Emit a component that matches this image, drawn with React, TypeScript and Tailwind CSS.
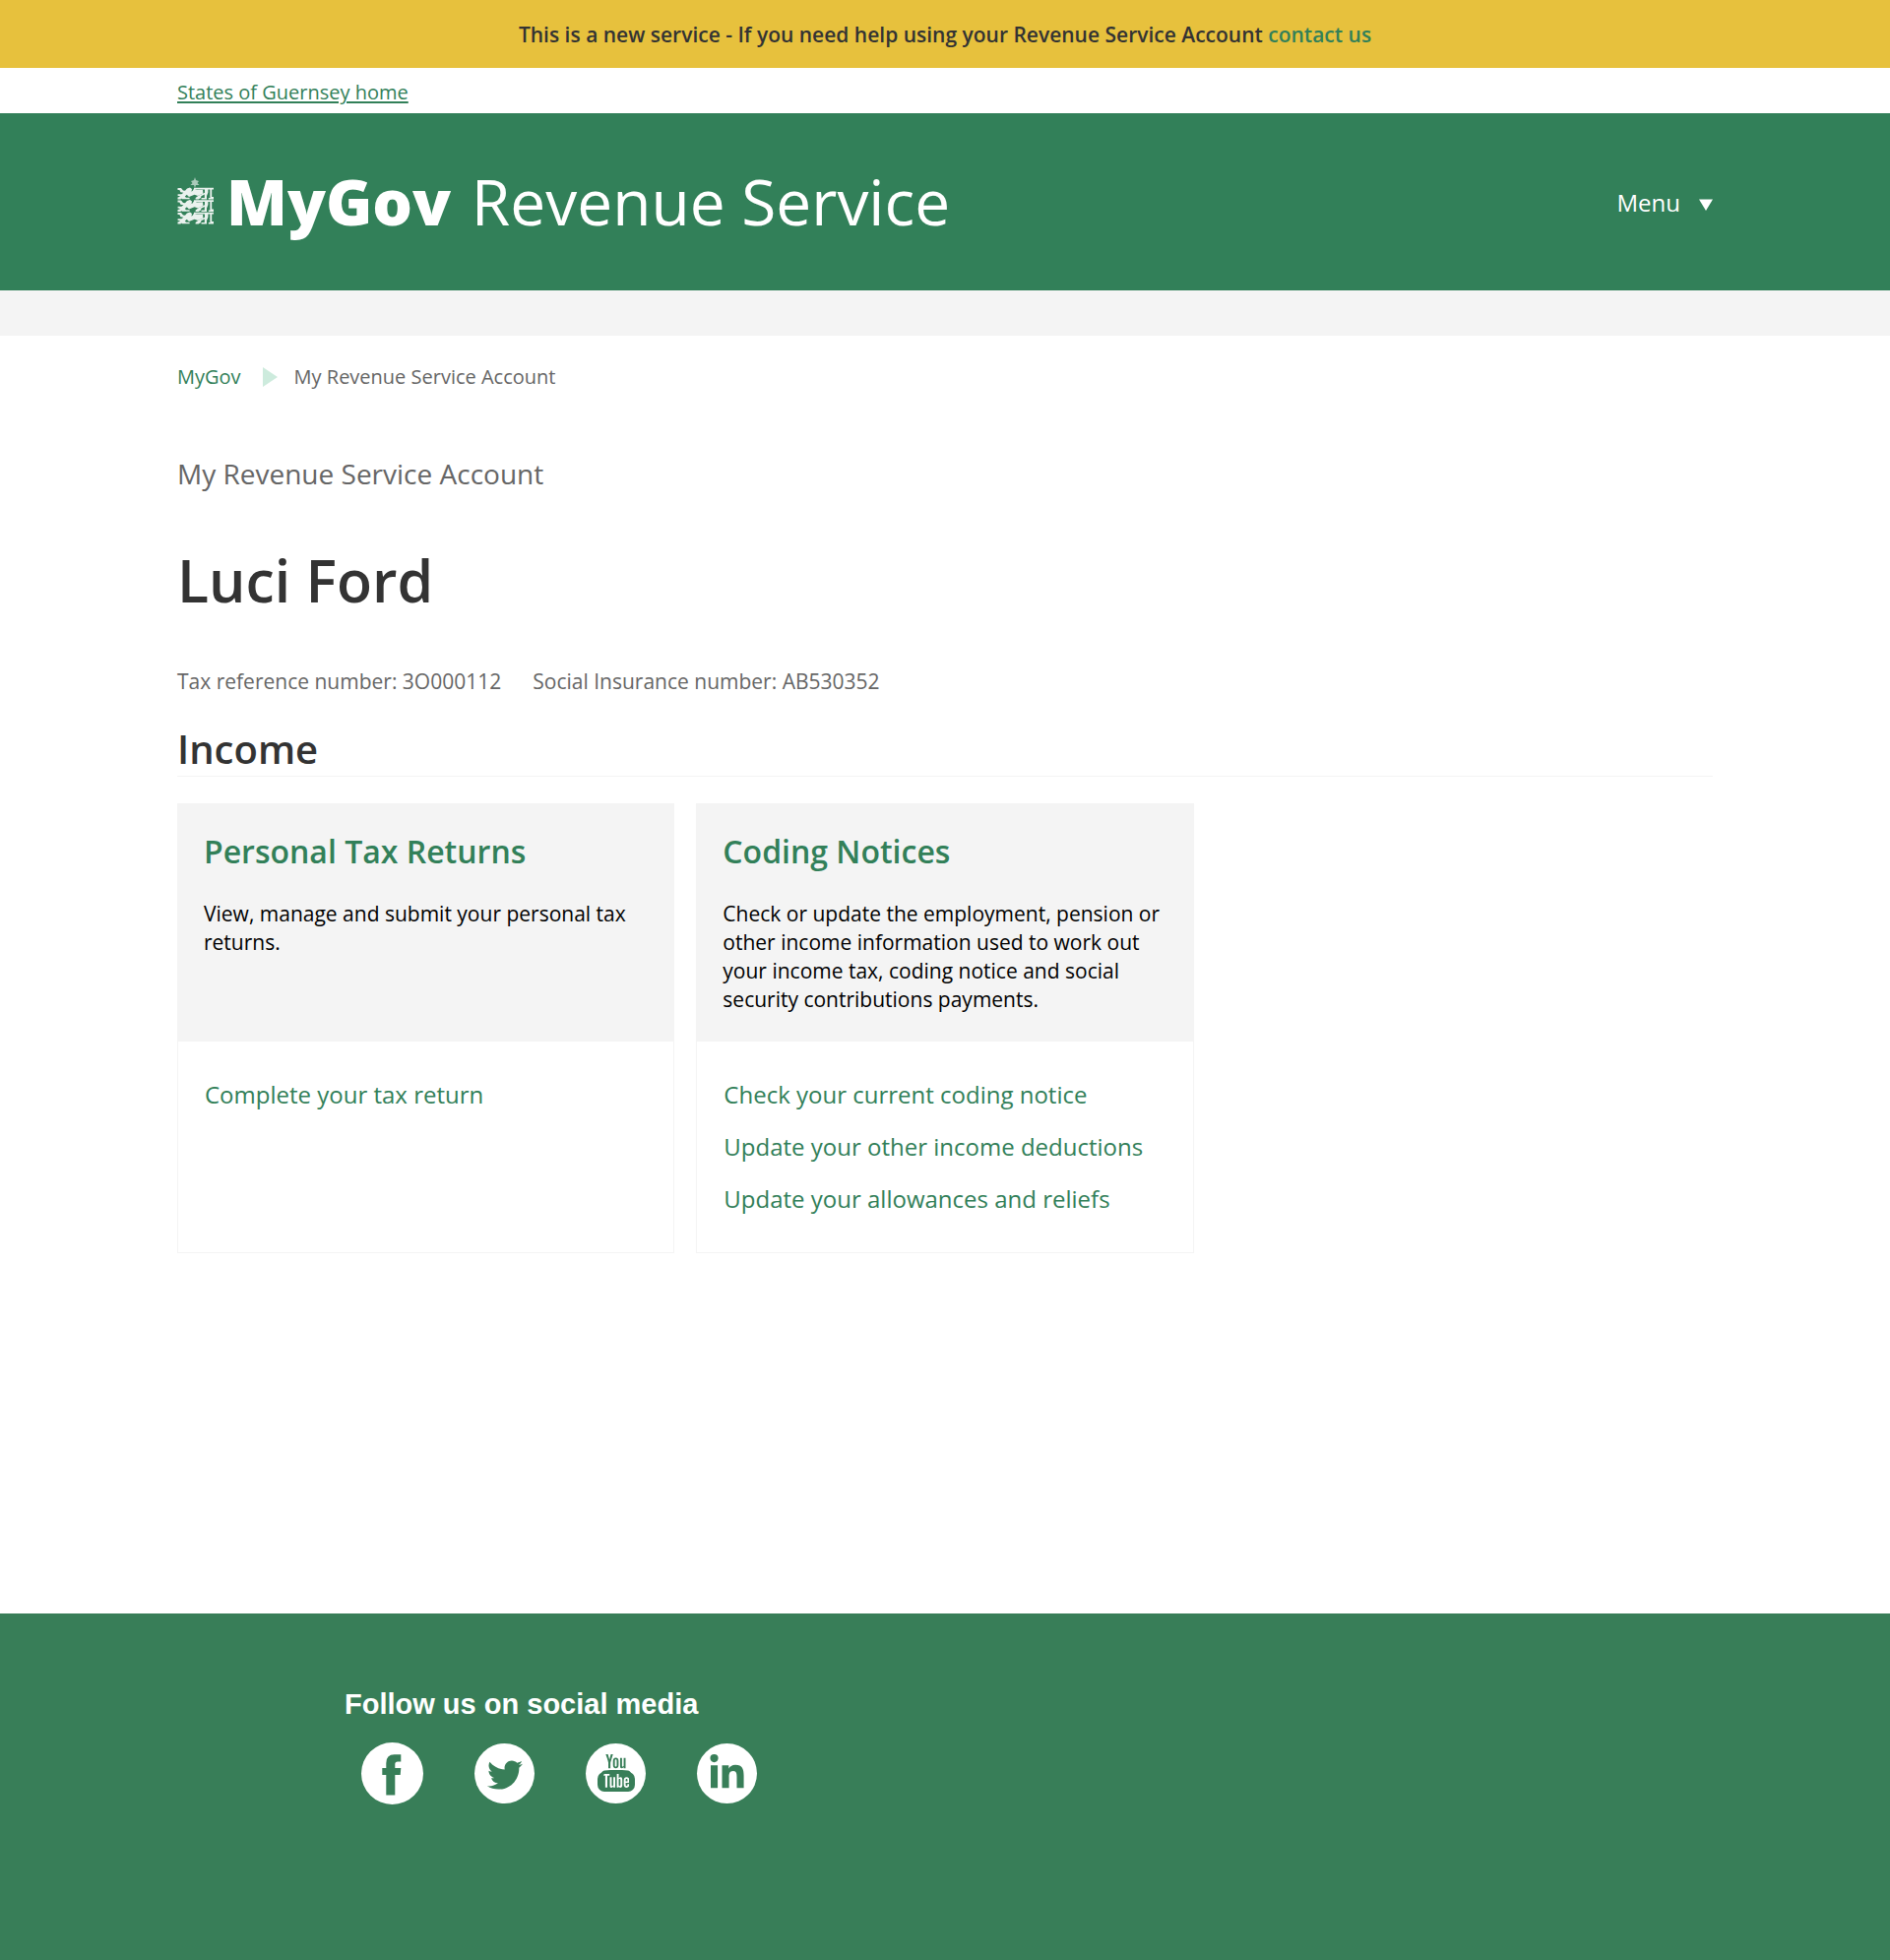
import React from "react";
import { FaLinkedinIn, FaTwitter } from "react-icons/fa";
import { TfiYoutube } from "react-icons/tfi";

const cards = [
  {
    title: "Personal Tax Returns",
    text: "View, manage and submit your personal tax returns.",
    links: ["Complete your tax return"],
  },
  {
    title: "Coding Notices",
    text: "Check or update the employment, pension or other income information used to work out your income tax, coding notice and social security contributions payments.",
    links: [
      "Check your current coding notice",
      "Update your other income deductions",
      "Update your allowances and reliefs",
    ],
  },
];

function Lion({ y }: { y: number }) {
  return (
    <g transform={`translate(0 ${y})`}>
      <path d="M0.5 0.6 H4 L6 3 L8 3.2 L10 1 L13 0 L15 1.4 L14.5 4 L11 6.2 L7.8 9 L9 10.2 H12.6 V11.8 H5 L4 11 L3.6 12 L0.5 12 V10 L3 9.2 L2 8.6 H0.6 V6.8 L4.4 6.8 L6.4 5.2 L3.4 4.8 L2.4 2.4 L0.5 2.4 Z" />
      <path d="M8.5 6 L15.6 3.4 L17 1.2 L20 2.4 L26 2.2 L26.4 6 L21 8.4 L17.6 7.2 L12 9.6 Z" />
      <path d="M17 0.3 H37 V1.9 H35.2 V9.4 H37 V12 H31.8 V10.4 H33.4 V1.9 H31.4 V5 L30 8.4 V12 H24.5 V10.6 H27.8 V7 L24.4 8.8 L24 10.4 L21.6 12 H18.6 V10.6 L22 8 L28 5.2 V1.9 H17 Z" />
    </g>
  );
}

function Crest() {
  return (
    <svg viewBox="0 0 38 50" className="h-[50px] w-[38px] shrink-0 text-white opacity-90" fill="currentColor" aria-hidden="true">
      <path d="M18 0 L19 3 L22 4 L20.5 6 L22.5 8 L19 8 L18 11 L17 8 L13.5 8 L15.5 6 L14 4 L17 3 Z" opacity="0.65" />
      <Lion y={10.5} />
      <Lion y={23} />
      <Lion y={35.5} />
    </svg>
  );
}

function FacebookMark() {
  return (
    <svg viewBox="0 0 63 63" className="size-full" fill="currentColor" aria-hidden="true">
      <path d="M40.3 12.3 V19.5 H37 Q34.3 19.5 34.3 22 V26 H40.3 L39.7 33 H34.3 V53.5 H25.3 V33 H21.3 V26 H25.3 V21 Q25.3 12.3 33.6 12.3 Z" />
    </svg>
  );
}

function YoutubeMark() {
  return (
    <span className="relative block size-[38px]">
      <TfiYoutube size={38} />
      <span className="absolute inset-x-0 bottom-0 h-5 rounded-[7px] border-x-[6px] border-y-2 border-[#387e58]" />
    </span>
  );
}

export default function App() {
  return (
    <div className="min-h-screen bg-white font-['Open_Sans',sans-serif] text-[#333]">
      <div className="flex min-h-[69px] items-center justify-center bg-[#e7c13d] px-6 text-center text-[21px] leading-[30px] font-semibold">
        <p>
          This is a new service - If you need help using your Revenue Service Account{" "}
          <a href="#contact" className="text-[#328059]">contact us</a>
        </p>
      </div>
      <div className="pt-[11px] pb-[7px]">
        <div className="mx-auto max-w-[1560px] text-[20px] leading-7">
          <a href="#home" className="text-[#328059] underline underline-offset-2">States of Guernsey home</a>
        </div>
      </div>
      <header className="bg-[#328059] text-white">
        <div className="mx-auto flex min-h-[180px] max-w-[1560px] items-center justify-between">
          <a href="#mygov" className="flex items-center gap-3 text-[64px] leading-[88px]">
            <Crest />
            <span><b className="mr-1 font-extrabold">MyGov</b> Revenue Service</span>
          </a>
          <button type="button" className="flex items-center gap-[19px] pt-px text-[24px] leading-8">
            Menu
            <svg viewBox="0 0 14 12" className="mt-1 h-3 w-3.5" fill="currentColor" aria-hidden="true">
              <path d="M0 0.5 H14 L7 12 Z" />
            </svg>
          </button>
        </div>
      </header>
      <div className="h-[46px] bg-[#f4f4f4]" />
      <main className="mx-auto max-w-[1560px] pt-7 pb-[366px]">
        <nav aria-label="Breadcrumb" className="flex items-center text-[20px] leading-7">
          <a href="#mygov" className="text-[#328059]">MyGov</a>
          <svg viewBox="0 0 15 20" className="mr-[17px] ml-[22px] h-5 w-[15px]" fill="#cdebdd" aria-hidden="true">
            <path d="M0 0 L15 10 L0 20 Z" />
          </svg>
          <span className="text-[#666]">My Revenue Service Account</span>
        </nav>
        <p className="mt-16 text-[28px] leading-10 text-[#666]">My Revenue Service Account</p>
        <h1 className="mt-12 text-[59px] leading-[80px] font-semibold">Luci Ford</h1>
        <div className="mt-12 flex gap-8 text-[21px] leading-[30px] text-[#666]">
          <span>Tax reference number: 3O000112</span>
          <span>Social Insurance number: AB530352</span>
        </div>
        <h2 className="mt-[27px] border-b border-[#f4f4f4] text-[40px] leading-[54px] font-semibold">Income</h2>
        <div className="mt-[27px] grid grid-cols-3 gap-[22px]">
          {cards.map((card) => (
            <section key={card.title} className="flex flex-col">
              <div className="min-h-[242px] bg-[#f4f4f4] px-[27px] py-7">
                <h3 className="text-[32px] leading-[42px] font-semibold text-[#328059]">{card.title}</h3>
                <p className="mt-7 text-[21px] leading-[29px] text-black">{card.text}</p>
              </div>
              <ul className="flex grow flex-col gap-5 border border-t-0 border-[#f4f4f4] px-[27px] pt-[37px] pb-[38px] text-[24px] leading-[33px]">
                {card.links.map((link) => (
                  <li key={link}>
                    <a href="#service" className="text-[#328059]">{link}</a>
                  </li>
                ))}
              </ul>
            </section>
          ))}
        </div>
      </main>
      <footer className="bg-[#387e58] pt-[72px] pb-[158px] text-white">
        <div className="mx-auto max-w-[1220px]">
          <h2 className="font-['Liberation_Sans',sans-serif] text-[29px] leading-10 font-bold">Follow us on social media</h2>
          <div className="mt-[18px] ml-[17px] flex h-16 items-center gap-[52px] text-[#387e58]">
            <a href="#facebook" aria-label="Facebook" className="size-[63px] rounded-full bg-white"><FacebookMark /></a>
            <a href="#twitter" aria-label="Twitter" className="flex size-[61px] items-center justify-center rounded-full bg-white pt-1"><FaTwitter size={36} /></a>
            <a href="#youtube" aria-label="YouTube" className="flex size-[61px] items-center justify-center rounded-full bg-white"><YoutubeMark /></a>
            <a href="#linkedin" aria-label="LinkedIn" className="flex size-[61px] items-center justify-center rounded-full bg-white"><FaLinkedinIn size={39} /></a>
          </div>
        </div>
      </footer>
    </div>
  );
}
